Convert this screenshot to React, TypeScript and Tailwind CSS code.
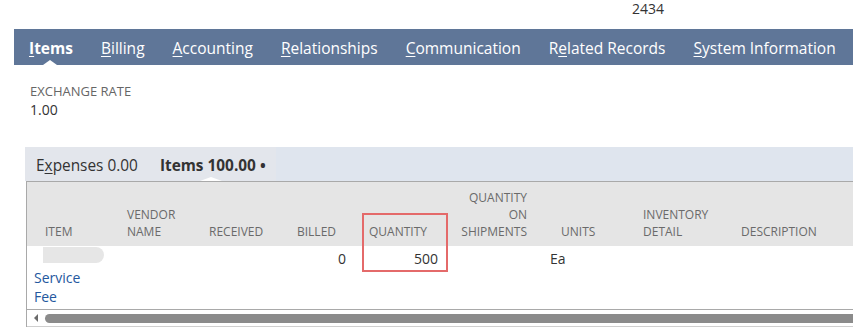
import React from "react";

type Col = {
  key: string;
  width: number;
  head: string[];
  headClass: string;
};

const cols: Col[] = [
  { key: "item", width: 93, head: ["ITEM"], headClass: "pl-[18px]" },
  { key: "vendor", width: 82, head: ["VENDOR", "NAME"], headClass: "pl-[7px]" },
  { key: "received", width: 88, head: ["RECEIVED"], headClass: "pl-[7px]" },
  { key: "billed", width: 72, head: ["BILLED"], headClass: "pl-[7px]" },
  { key: "qty", width: 85, head: ["QUANTITY"], headClass: "pl-[7px]" },
  { key: "qos", width: 89, head: ["QUANTITY", "ON", "SHIPMENTS"], headClass: "pr-[9px] text-right" },
  { key: "units", width: 100, head: ["UNITS"], headClass: "pl-[25px]" },
  { key: "inv", width: 98, head: ["INVENTORY", "DETAIL"], headClass: "pl-[7px]" },
  { key: "desc", width: 130, head: ["DESCRIPTION"], headClass: "pl-[7px]" },
];

const navTabs = [
  { first: "I", rest: "tems", active: true },
  { first: "B", rest: "illing" },
  { first: "A", rest: "ccounting" },
  { first: "R", rest: "elationships" },
  { first: "C", rest: "ommunication" },
];

export default function App() {
  return (
    <div className="w-[853px] h-[332px] overflow-hidden bg-white font-['Open_Sans',sans-serif]">
      <div className="h-[29px] pl-[632px] pt-[1px] text-[14px] leading-[15px] text-[#333]">2434</div>

      {/* main record tabs */}
      <nav className="relative ml-[14px] flex h-[36px] items-center gap-[28px] bg-[#5f7698] pl-[15px] pt-[3px] text-[15.5px] text-white whitespace-nowrap">
        {navTabs.map((t) => (
          <span key={t.rest} className={t.active ? "font-bold" : ""}>
            <span className="underline underline-offset-2">{t.first}</span>
            {t.rest}
          </span>
        ))}
        <span>
          R<span className="underline underline-offset-2">e</span>lated Records
        </span>
        <span>
          <span className="underline underline-offset-2">S</span>ystem Information
        </span>
        <span className="absolute bottom-0 left-[29px] h-0 w-0 border-x-[7px] border-b-[5px] border-x-transparent border-b-white" />
      </nav>

      <div className="mt-[18px] pl-[30px]">
        <div className="text-[13px] leading-[17px] text-[#666]">EXCHANGE RATE</div>
        <div className="text-[14px] leading-[19px] text-[#333]">1.00</div>
      </div>

      {/* sublist tabs */}
      <div className="mt-[28px] ml-[25px] flex h-[34px] bg-[#dfe5ee] text-[15.4px] text-[#333]">
        <div className="relative flex w-[251px] items-center gap-[22px] bg-[#e3e6ec] pl-[11px] pt-[3px]">
          <span>
            E<span className="underline underline-offset-2">x</span>penses 0.00
          </span>
          <span className="font-bold">Items 100.00 •</span>
          <span className="absolute bottom-0 left-[175px] h-0 w-0 border-x-[11px] border-b-[4px] border-x-transparent border-b-white" />
        </div>
      </div>

      {/* items sublist */}
      <div className="relative ml-[26px] border-l border-t border-[#a9a9a9]">
        <div className="flex h-[64px] bg-[#e5e5e5] text-[12px] leading-[17px] text-[#6a6a6a]">
          {cols.map((c) => (
            <div
              key={c.key}
              style={{ width: c.width }}
              className={`flex shrink-0 flex-col justify-end pb-[6px] ${c.headClass}`}
            >
              {c.head.map((h) => (
                <div key={h}>{h}</div>
              ))}
            </div>
          ))}
        </div>

        <div className="flex border-b border-[#a9a9a9] pb-[3px] text-[14px] leading-[19px] text-[#333]">
          <div className="w-[93px] shrink-0 pl-[7px] pt-[1px]">
            <div className="mb-[5px] ml-[9px] h-[16px] w-[61px] rounded-r-[8px] bg-[#e6e6e6] blur-[0.5px]" />
            <div className="text-[#24589e]">Service</div>
            <div className="text-[#24589e]">Fee</div>
          </div>
          <div className="w-[82px] shrink-0" />
          <div className="w-[88px] shrink-0" />
          <div className="w-[72px] shrink-0 pr-[16px] pt-[3px] text-right">0</div>
          <div className="w-[85px] shrink-0 pr-[9px] pt-[3px] text-right">500</div>
          <div className="w-[89px] shrink-0" />
          <div className="w-[100px] shrink-0 pl-[14px] pt-[3px]">Ea</div>
          <div className="w-[98px] shrink-0" />
          <div className="w-[130px] shrink-0" />
        </div>

        {/* horizontal scrollbar */}
        <div className="flex h-[17px] items-center border-b border-[#cfcfcf] pl-[7px]">
          <span className="h-0 w-0 border-y-[4px] border-r-[4px] border-y-transparent border-r-[#6b6b6b]" />
          <div className="ml-[7px] h-[9px] flex-1 rounded-l-full bg-[#8b8b8b]" />
        </div>

        <div className="pointer-events-none absolute left-[335px] top-[31px] h-[59px] w-[86px] border-2 border-[#e46a6a]" />
      </div>
    </div>
  );
}
